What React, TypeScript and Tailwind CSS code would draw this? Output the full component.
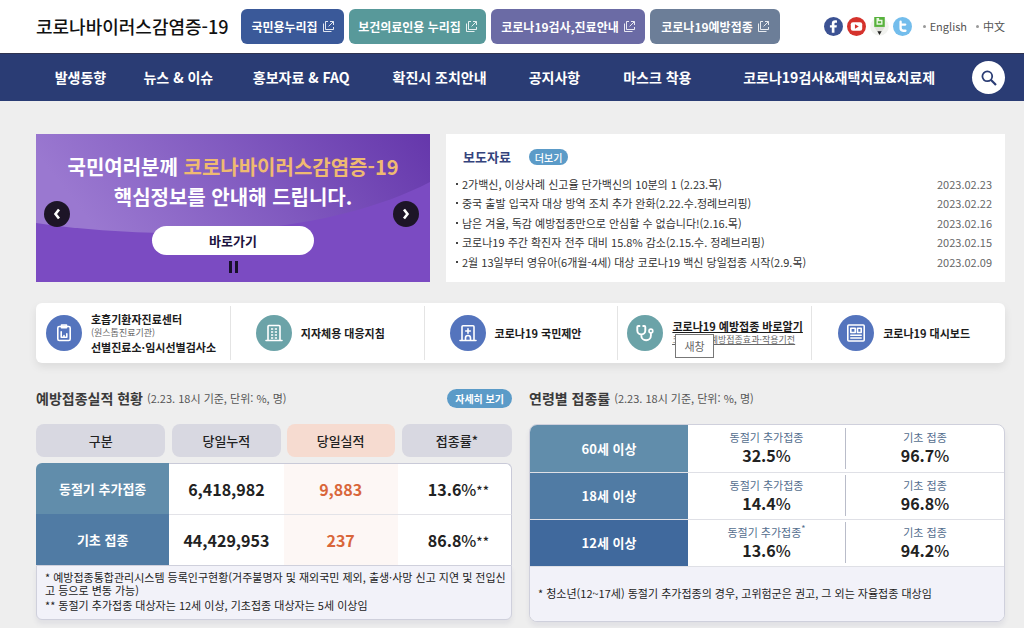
import type { ReactNode } from "react";

const quickButtons = [
  { label: "국민용누리집", style: "w-[103px] bg-[#3a5999]" },
  { label: "보건의료인용 누리집", style: "w-[137px] bg-[#58999a]" },
  { label: "코로나19검사,진료안내", style: "w-[154px] bg-[#6b6ba5]" },
  { label: "코로나19예방접종", style: "w-[130px] bg-[#6c7e98]" },
];

const menu = [
  "발생동향",
  "뉴스 & 이슈",
  "홍보자료 & FAQ",
  "확진시 조치안내",
  "공지사항",
  "마스크 착용",
  "코로나19검사&재택치료&치료제",
];

const news = [
  ["2가백신, 이상사례 신고율 단가백신의 10분의 1 (2.23.목)", "2023.02.23"],
  ["중국 출발 입국자 대상 방역 조치 추가 완화(2.22.수.정례브리핑)", "2023.02.22"],
  ["남은 겨울, 독감 예방접종만으로 안심할 수 없습니다!(2.16.목)", "2023.02.16"],
  ["코로나19 주간 확진자 전주 대비 15.8% 감소(2.15.수. 정례브리핑)", "2023.02.15"],
  ["2월 13일부터 영유아(6개월-4세) 대상 코로나19 백신 당일접종 시작(2.9.목)", "2023.02.09"],
];

const ages = [
  { age: "60세 이상", booster: "32.5", basic: "96.7", bg: "bg-[#618dab]", star: false },
  { age: "18세 이상", booster: "14.4", basic: "96.8", bg: "bg-[#507ba4]", star: false },
  { age: "12세 이상", booster: "13.6", basic: "94.2", bg: "bg-[#40699d]", star: true },
];

function ExternalIcon() {
  return (
    <svg className="size-[11px] shrink-0" viewBox="0 0 11 11" fill="none" stroke="currentColor" strokeOpacity="0.85" aria-hidden="true">
      <path d="M5 .5H2.500V8.500H10.500V6M.5 2.500V10.500H8.500M7 .5H10.500V4M10.200 .8L5.600 5.400" />
    </svg>
  );
}

function Facebook() {
  return (
    <svg className="size-[19px]" viewBox="0 0 18 18" aria-hidden="true">
      <circle cx="9" cy="9" r="9" fill="#3c5293" />
      <path d="M9.900 15V9.900h2l.3-2.200H9.900V6.500c0-.7.3-1.100 1.100-1.100h1.300V3.200c-.4-.1-1.100-.1-1.700-.1-2.100 0-3.200 1.200-3.200 3v1.600H5.600v2.200h1.800V15z" fill="#fff" />
    </svg>
  );
}

function Youtube() {
  return (
    <svg className="size-[19px]" viewBox="0 0 18 18" aria-hidden="true">
      <circle cx="9" cy="9" r="9" fill="#d5322c" />
      <rect x="3.600" y="4.900" width="10.800" height="8.200" rx="2" fill="#fff" />
      <path d="M7.500 6.900v4.200L11.200 9z" fill="#d5322c" />
    </svg>
  );
}

function Blog() {
  return (
    <svg className="size-[19px]" viewBox="0 0 18 18" aria-hidden="true">
      <circle cx="9" cy="9" r="8.800" fill="#f1f2ef" />
      <path d="M4 0h10v9.400H4z" fill="#57b23c" />
      <path d="M6.800 1v5.600h4.400V3.300H8V1" fill="none" stroke="#e9f7e2" strokeWidth="1.300" />
      <path d="M4 9.400h10L9 17z" fill="#dfe0da" />
      <path d="M7 13.500h4L9 17z" fill="#222" />
    </svg>
  );
}

function Twitter() {
  return (
    <svg className="size-[19px]" viewBox="0 0 18 18" aria-hidden="true">
      <circle cx="9" cy="9" r="9" fill="#73bdec" />
      <path d="M7.200 4.400v6.100c0 1.700 .9 2.500 2.400 2.500h2.200M7.200 7.200h4.400" fill="none" stroke="#fff" strokeWidth="2.200" strokeLinecap="round" strokeLinejoin="round" />
    </svg>
  );
}

function Glyph({ children }: { children: ReactNode }) {
  return (
    <svg className="size-5" viewBox="0 0 20 20" fill="none" stroke="#fff" strokeWidth="1.600" strokeLinecap="round" strokeLinejoin="round" aria-hidden="true">
      {children}
    </svg>
  );
}

const clipboard = (
  <Glyph>
    <rect x="3.800" y="3.500" width="12.400" height="14" rx="1.500" />
    <path d="M7.500 2h5v2.700h-5z" fill="#fff" fillOpacity="0.400" />
    <path d="M7.200 14V8.800M10 14v-1.500M12.800 14v-3.200M7.200 14.200h5.600" />
  </Glyph>
);
const office = (
  <Glyph>
    <path d="M4 17.300V3.500a1 1 0 0 1 1-1h10a1 1 0 0 1 1 1v13.800M2 17.500h16" />
    <path d="M7 6h2.200M10.800 6H13M7 9h2.200M10.800 9H13M7 12h2.200M10.800 12H13M7 15h2.200M10.800 15H13" strokeLinecap="butt" strokeWidth="1.700" />
  </Glyph>
);
const hospital = (
  <Glyph>
    <path d="M4 17.300V3.800a1 1 0 0 1 1-1h10a1 1 0 0 1 1 1v13.500M2 17.500h16M10 5.700v4.600M7.700 8h4.600M7.500 17.300v-2.300a2.500 2.500 0 0 1 5 0v2.300" />
  </Glyph>
);
const stethoscope = (
  <Glyph>
    <path d="M4.500 3H3.300a1 1 0 0 0-1 1v3.500a4 4 0 0 0 8 0V4a1 1 0 0 0-1-1H8.200M6.300 11.500v1a4.800 4.800 0 0 0 9.600 0V10" strokeWidth="1.900" />
    <circle cx="15.900" cy="8" r="1.900" />
  </Glyph>
);
const paper = (
  <Glyph>
    <rect x="1.800" y="2" width="16.400" height="16" rx="1" />
    <path d="M4.800 5.300h4.400v4.200H4.800zM11.500 5.300h3.700v4.200h-3.700zM4.800 12.300h10.400M4.800 15h10.400" />
  </Glyph>
);

function QuickLink({ icon, tone, pad, children }: { icon: ReactNode; tone: string; pad: string; children: ReactNode }) {
  return (
    <li className={`relative flex items-center ${pad}`}>
      <a href="#" className="flex items-center gap-[9px] text-[11px] leading-[14px] font-bold whitespace-nowrap text-[#1b1b1b]">
        <span className={`grid size-9 shrink-0 place-items-center rounded-full ${tone}`}>{icon}</span>
        {children}
      </a>
    </li>
  );
}

function Percent({ value, stars }: { value: string; stars?: string }) {
  return (
    <span className="text-[16px] font-bold text-[#222]">
      {value}
      <span className="font-medium">%</span>
      {stars && <span className="text-[13px] font-medium">{stars}</span>}
    </span>
  );
}

function Rate({ label, value, star }: { label: string; value: string; star?: boolean }) {
  return (
    <div className="flex flex-col items-center pb-[2px]">
      <span className="text-[11px] leading-[17px] text-[#546e8e]">
        {label}
        {star && <sup className="text-[9px] leading-none">*</sup>}
      </span>
      <span className="leading-[19px]">
        <Percent value={value} />
      </span>
    </div>
  );
}

function Header() {
  return (
    <header>
      <div className="flex h-[53px] items-center bg-white pr-[19px] pl-9">
        <h1 className="mr-2 w-[197px] text-[18px] font-medium whitespace-nowrap text-[#111]">
          <a href="#">코로나바이러스감염증-19</a>
        </h1>
        <div className="flex gap-[5px]">
          {quickButtons.map((b) => (
            <a
              key={b.label}
              href="#"
              className={`flex h-[35px] items-center justify-center gap-[5px] rounded-md text-[12px] font-bold whitespace-nowrap text-white ${b.style}`}
            >
              {b.label}
              <ExternalIcon />
            </a>
          ))}
        </div>
        <div className="ml-auto flex items-center gap-1">
          <a href="#" aria-label="페이스북"><Facebook /></a>
          <a href="#" aria-label="유튜브"><Youtube /></a>
          <a href="#" aria-label="블로그"><Blog /></a>
          <a href="#" aria-label="트위터"><Twitter /></a>
        </div>
        <ul className="ml-[11px] flex gap-[9px] text-[11px] text-[#555]">
          <li className="flex items-center gap-1">
            <span className="size-[3px] rounded-full bg-[#999]" />
            <a href="#">English</a>
          </li>
          <li className="flex items-center gap-1">
            <span className="size-[3px] rounded-full bg-[#999]" />
            <a href="#">中文</a>
          </li>
        </ul>
      </div>
      <nav className="flex h-12 items-center border-t border-[#2f3350] bg-[#2a3c74] pr-[19px] pl-9">
        <ul className="grid flex-1 grid-cols-[89fr_107fr_139fr_138fr_92fr_114fr_250fr] text-center text-[14px] font-bold whitespace-nowrap text-white">
          {menu.map((m) => (
            <li key={m}>
              <a href="#">{m}</a>
            </li>
          ))}
        </ul>
        <button type="button" aria-label="검색" className="ml-2 grid size-[33px] place-items-center rounded-full bg-white">
          <svg className="size-4" viewBox="0 0 16 16" fill="none" stroke="#2a3c74" strokeWidth="1.800" aria-hidden="true">
            <circle cx="6.300" cy="6.300" r="4.900" />
            <path d="M9.800 9.800L15 15" strokeWidth="2.200" />
          </svg>
        </button>
      </nav>
    </header>
  );
}

function Banner() {
  return (
    <section className="relative flex flex-col items-center overflow-hidden bg-[#7b4bc2] pt-[18px]">
      <svg className="absolute inset-0 size-full" viewBox="0 0 394 148" preserveAspectRatio="none" aria-hidden="true">
        <defs>
          <linearGradient id="wave" x1="0" y1="0.200" x2="1" y2="0">
            <stop offset="0" stopColor="#9a78d0" />
            <stop offset="0.500" stopColor="#8059bf" />
            <stop offset="1" stopColor="#6537ab" />
          </linearGradient>
        </defs>
        <path d="M0 0H394V48C290 102 130 108 0 89Z" fill="url(#wave)" />
      </svg>
      <p className="relative text-center text-[20px] leading-[30px] font-bold whitespace-nowrap text-white">
        국민여러분께 <span className="text-[#efba71]">코로나바이러스감염증-19</span>
        <br />
        핵심정보를 안내해 드립니다.
      </p>
      <a href="#" className="relative mt-[14px] grid h-[29px] w-[162px] place-items-center rounded-full bg-white text-[13px] font-bold text-[#1d1440]">
        바로가기
      </a>
      <button type="button" aria-label="정지" className="relative mt-[6px] flex h-3 gap-[3px]">
        <span className="h-full w-[3px] bg-[#17102a]" />
        <span className="h-full w-[3px] bg-[#17102a]" />
      </button>
      <button type="button" aria-label="이전" className="absolute top-[67px] left-2 grid size-[26px] place-items-center rounded-full bg-[#1d1527]">
        <svg className="size-3" viewBox="0 0 12 12" fill="none" stroke="#fff" strokeWidth="2.600" aria-hidden="true">
          <path d="M8 1.500L4.500 6 8 10.500" />
        </svg>
      </button>
      <button type="button" aria-label="다음" className="absolute top-[67px] right-[11px] grid size-[26px] place-items-center rounded-full bg-[#1d1527]">
        <svg className="size-3" viewBox="0 0 12 12" fill="none" stroke="#fff" strokeWidth="2.600" aria-hidden="true">
          <path d="M4 1.500L7.500 6 4 10.500" />
        </svg>
      </button>
    </section>
  );
}

function News() {
  return (
    <section className="flex flex-col bg-white pt-[15px] pr-[13px] pb-[10px] pl-[10px]">
      <div className="mb-[9px] flex h-4 items-center gap-[18px] pl-[7px]">
        <h2 className="text-[13px] font-bold text-[#34437c]">보도자료</h2>
        <a href="#" className="flex h-4 items-center rounded-full bg-[#5b9bc8] px-[6px] text-[10px] font-medium text-white">
          더보기
        </a>
      </div>
      <ul className="grid flex-1 auto-rows-fr text-[11px] text-[#333]">
        {news.map(([title, date]) => (
          <li key={title} className="flex items-center justify-between whitespace-nowrap">
            <a href="#" className="flex items-center gap-1">
              <span className="size-[2px] bg-[#444]" />
              {title}
            </a>
            <time className="text-[#666]">{date}</time>
          </li>
        ))}
      </ul>
    </section>
  );
}

function SectionHead({ title, children }: { title: string; children?: ReactNode }) {
  return (
    <div className="mb-[14px] flex h-6 items-center gap-1 whitespace-nowrap">
      <h2 className="text-[14px] font-bold text-[#3a3a3a]">{title}</h2>
      <span className="text-[11px] text-[#555]">(2.23. 18시 기준, 단위: %, 명)</span>
      {children}
    </div>
  );
}

function Doses() {
  const rows = [
    { label: "동절기 추가접종", total: "6,418,982", today: "9,883", rate: "13.6", bg: "bg-[#618dab]", corner: "rounded-tl-md", end: "rounded-tr-md", top: "border-t border-t-[#c9cad8]" },
    { label: "기초 접종", total: "44,429,953", today: "237", rate: "86.8", bg: "bg-[#507ba4]", corner: "", end: "", top: "border-t border-t-[#e3e3e8]" },
  ];
  const pill = "flex h-[33px] items-center justify-center rounded-lg";
  return (
    <section>
      <SectionHead title="예방접종실적 현황">
        <a href="#" className="ml-auto flex h-[19px] items-center rounded-full bg-[#5b9bc8] px-2 text-[10px] font-bold text-white">
          자세히 보기
        </a>
      </SectionHead>
      <table className="w-full table-fixed border-separate border-spacing-0 text-center">
        <colgroup>
          <col className="w-[28%]" />
          <col className="w-[24%]" />
          <col className="w-[24%]" />
          <col className="w-[24%]" />
        </colgroup>
        <thead className="text-[13px] text-[#222]">
          <tr>
            <th className="pr-1 pb-[6px] font-medium"><div className={`${pill} bg-[#d8d8e1]`}>구분</div></th>
            <th className="px-[3px] pb-[6px] font-medium"><div className={`${pill} bg-[#d8d8e1]`}>당일누적</div></th>
            <th className="px-[3px] pb-[6px] font-medium"><div className={`${pill} bg-[#f6dbd0]`}>당일실적</div></th>
            <th className="pb-[6px] pl-1 font-medium"><div className={`${pill} bg-[#d8d8e1]`}>접종률*</div></th>
          </tr>
        </thead>
        <tbody>
          {rows.map((r) => (
            <tr key={r.label} className="h-[51px]">
              <th scope="row" className={`text-[13px] font-bold text-white ${r.bg} ${r.corner}`}>{r.label}</th>
              <td className={`bg-white text-[16px] font-bold text-[#222] ${r.top}`}>{r.total}</td>
              <td className={`bg-[#fdf7f5] text-[16px] font-bold text-[#d9663a] ${r.top}`}>{r.today}</td>
              <td className={`border-r border-r-[#c9cad8] bg-white pl-2 ${r.top} ${r.end}`}>
                <Percent value={r.rate} stars="**" />
              </td>
            </tr>
          ))}
        </tbody>
        <tfoot>
          <tr>
            <td colSpan={4} className="rounded-b-md border border-[#cfd0dc] bg-[#f2f2f9] px-2 pt-[5px] pb-[7px] text-left text-[11px] leading-[13px] text-[#222] shadow-[0_4px_5px_rgba(60,60,120,0.08)]">
              <p className="whitespace-nowrap">
                * 예방접종통합관리시스템 등록인구현황(거주불명자 및 재외국민 제외, 출생·사망 신고 지연 및 전입신
                <br />
                고 등으로 변동 가능)
              </p>
              <p className="mt-[2px]">** 동절기 추가접종 대상자는 12세 이상, 기초접종 대상자는 5세 이상임</p>
            </td>
          </tr>
        </tfoot>
      </table>
    </section>
  );
}

function Ages() {
  return (
    <section>
      <SectionHead title="연령별 접종률" />
      <div className="overflow-hidden rounded-lg border border-[#cfd0dc] bg-white shadow-[0_4px_5px_rgba(60,60,120,0.08)]">
        <table className="w-full table-fixed border-collapse">
          <tbody>
            {ages.map((a) => (
              <tr key={a.age} className="h-[47px] border-b border-[#dfe0e6]">
                <th scope="row" className={`w-1/3 text-[13px] font-bold text-white ${a.bg}`}>{a.age}</th>
                <td>
                  <div className="flex h-[41px] flex-col justify-center border-r border-[#b9bcc9]">
                    <Rate label="동절기 추가접종" value={a.booster} star={a.star} />
                  </div>
                </td>
                <td>
                  <Rate label="기초 접종" value={a.basic} />
                </td>
              </tr>
            ))}
          </tbody>
        </table>
        <p className="flex h-[54px] items-center bg-[#f2f2f9] px-2 text-[11px] text-[#222]">
          * 청소년(12~17세) 동절기 추가접종의 경우, 고위험군은 권고, 그 외는 자율접종 대상임
        </p>
      </div>
    </section>
  );
}

export default function App() {
  return (
    <div lang="ko" className="min-h-screen bg-[#eeeeee] font-['Noto_Sans_CJK_KR',sans-serif]">
      <Header />
      <main className="pt-[33px] pr-[19px] pl-9">
        <div className="grid min-h-[148px] grid-cols-[394fr_559fr] gap-4">
          <Banner />
          <News />
        </div>
        <ul className="mt-[21px] grid h-[60px] grid-cols-5 rounded-md bg-white py-[3px] shadow-[0_4px_8px_rgba(0,0,0,0.08)] [&>li+li]:border-l [&>li+li]:border-[#e4e4e4]">
          <QuickLink icon={clipboard} tone="bg-[#5474bd]" pad="pl-[10px]">
            <span>
              호흡기환자진료센터
              <span className="block text-[9px] font-normal text-[#666]">(원스톱진료기관)</span>
              선별진료소·임시선별검사소
            </span>
          </QuickLink>
          <QuickLink icon={office} tone="bg-[#6ba3a8]" pad="pl-[25px]">
            <span>지자체용 대응지침</span>
          </QuickLink>
          <QuickLink icon={hospital} tone="bg-[#5474bd]" pad="pl-[25px]">
            <span>코로나19 국민제안</span>
          </QuickLink>
          <li className="relative flex items-center pl-[9px]">
            <a href="#" className="flex items-center gap-[9px] text-[11px] leading-[14px] font-bold whitespace-nowrap text-[#1b1b1b] underline">
              <span className="grid size-9 shrink-0 place-items-center rounded-full bg-[#6ba3a8]">{stethoscope}</span>
              <span>
                코로나19 예방접종 바로알기
                <span className="block text-[9px] font-normal text-[#666] underline">코로나19 예방접종효과·작용기전</span>
              </span>
            </a>
            <span role="tooltip" className="absolute top-7 left-[57px] border border-[#777] bg-white px-2 py-[3px] text-[11px] leading-4 text-[#666]">
              새창
            </span>
          </li>
          <QuickLink icon={paper} tone="bg-[#5474bd]" pad="pl-[26px]">
            <span>코로나19 대시보드</span>
          </QuickLink>
        </ul>
        <div className="mt-[23px] grid grid-cols-2 gap-[17px]">
          <Doses />
          <Ages />
        </div>
      </main>
    </div>
  );
}
